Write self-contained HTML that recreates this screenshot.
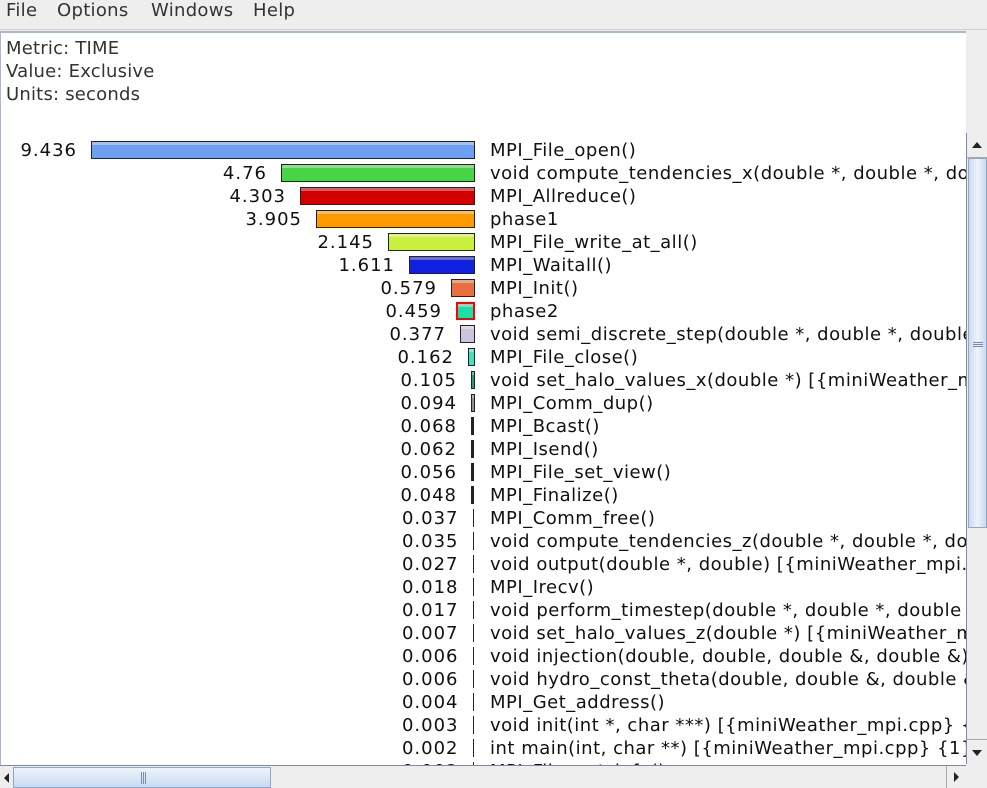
<!DOCTYPE html>
<html><head><meta charset="utf-8"><style>
*{margin:0;padding:0;box-sizing:border-box}
body{width:987px;height:788px;overflow:hidden;background:#eeeeee;font-family:"DejaVu Sans","Liberation Sans",sans-serif;color:#222;position:relative}
.menu{position:absolute;top:0;left:0;width:987px;height:30px;background:#eeeeee;border-bottom:1px solid #d0d0d0;font-size:18px;color:#333;letter-spacing:0.3px}
.menu span{position:absolute;top:0px}
.content{position:absolute;left:0;top:31px;width:966px;height:734px;background:#fff;border-top:2px solid #a9b8cc;border-left:1px solid #a9b8cc;overflow:hidden}
.hdr{position:absolute;left:5px;font-size:18px;color:#333;letter-spacing:0.2px}
.v{position:absolute;font-size:18px;text-align:right;width:120px;color:#111;letter-spacing:1px}
.l{position:absolute;left:490px;font-size:18px;white-space:nowrap;color:#111;letter-spacing:0.5px}
.b{position:absolute;height:18px;border:1.5px solid #222;box-shadow:inset 0 3px 0 rgba(255,255,255,.35)}
.vs{position:absolute;left:966px;top:133px;width:21px;height:631px;background:#eeeeee;border-left:1px solid #7a8aa8}
.hs{position:absolute;left:0;top:765px;width:966px;height:23px;background:#eeeeee;border-top:1px solid #7a8aa8}
.thumbv{position:absolute;left:1px;top:25px;width:19px;height:370px;background:linear-gradient(90deg,#c8daf0,#eef4fb 50%,#c8daf0);border:1px solid #8ea6c8}
.thumbh{position:absolute;left:13px;top:1px;width:258px;height:21px;background:linear-gradient(#eef4fb,#c8daf0);border:1px solid #8ea6c8}
</style></head><body>
<div class="menu"><span style="left:6px">File</span><span style="left:57px">Options</span><span style="left:151px">Windows</span><span style="left:253px">Help</span></div>
<div class="content">
<div class="hdr" style="top:5px">Metric: TIME</div>
<div class="hdr" style="top:28px">Value: Exclusive</div>
<div class="hdr" style="top:51px">Units: seconds</div>
</div>
<div class="vs">
<div style="position:absolute;left:0;top:0;width:20px;height:25px;border-bottom:1px solid #aaa"><div style="position:absolute;left:5px;top:9px;width:0;height:0;border-left:5px solid transparent;border-right:5px solid transparent;border-bottom:6px solid #222"></div></div>
<div class="thumbv"><div style="position:absolute;left:4px;top:183px;width:10px;height:5px;border-top:1px solid #7a8aa8;border-bottom:1px solid #7a8aa8"></div><div style="position:absolute;left:4px;top:185px;width:10px;height:1px;background:#7a8aa8"></div></div>
<div style="position:absolute;left:0;top:606px;width:20px;height:25px;border-top:1px solid #aaa"><div style="position:absolute;left:5px;top:10px;width:0;height:0;border-left:5px solid transparent;border-right:5px solid transparent;border-top:6px solid #222"></div></div>
</div>
<div class="hs">
<div style="position:absolute;left:4px;top:7px;width:0;height:0;border-top:5px solid transparent;border-bottom:5px solid transparent;border-right:5px solid #222"></div>
<div class="thumbh"><div style="position:absolute;left:127px;top:4px;width:5px;height:12px;border-left:1px solid #7a8aa8;border-right:1px solid #7a8aa8"></div><div style="position:absolute;left:129px;top:4px;width:1px;height:12px;background:#7a8aa8"></div></div>
<div style="position:absolute;left:946px;top:0;width:20px;height:22px;border-left:1px solid #aaa"><div style="position:absolute;left:7px;top:6px;width:0;height:0;border-top:5px solid transparent;border-bottom:5px solid transparent;border-left:5px solid #222"></div></div>
</div>
<div style="position:absolute;left:966px;top:31px;width:21px;height:102px;background:#eeeeee"></div>
<div id="wrap" style="position:absolute;left:0;top:33px;width:966px;height:732px;overflow:hidden"></div>
<script>
var d=[["9.436","MPI_File_open()","#6f9ff0"],["4.76","void compute_tendencies_x(double *, double *, double *, double *)","#45d545"],["4.303","MPI_Allreduce()","#d40000"],["3.905","phase1","#ff9a00"],["2.145","MPI_File_write_at_all()","#c8f03c"],["1.611","MPI_Waitall()","#1020e0"],["0.579","MPI_Init()","#e87040"],["0.459","phase2","#18e0a8"],["0.377","void semi_discrete_step(double *, double *, double *)","#ccc4dc"],["0.162","MPI_File_close()","#40e0c0"],["0.105","void set_halo_values_x(double *) [{miniWeather_mpi.cpp}]","#20a080"],["0.094","MPI_Comm_dup()","#909090"],["0.068","MPI_Bcast()","#222"],["0.062","MPI_Isend()","#222"],["0.056","MPI_File_set_view()","#222"],["0.048","MPI_Finalize()","#222"],["0.037","MPI_Comm_free()","#222"],["0.035","void compute_tendencies_z(double *, double *, double *)","#222"],["0.027","void output(double *, double) [{miniWeather_mpi.cpp}]","#222"],["0.018","MPI_Irecv()","#222"],["0.017","void perform_timestep(double *, double *, double *)","#222"],["0.007","void set_halo_values_z(double *) [{miniWeather_mpi.cpp}]","#222"],["0.006","void injection(double, double, double &, double &)","#222"],["0.006","void hydro_const_theta(double, double &, double &)","#222"],["0.004","MPI_Get_address()","#222"],["0.003","void init(int *, char ***) [{miniWeather_mpi.cpp}  {1}]","#222"],["0.002","int main(int, char **) [{miniWeather_mpi.cpp}  {1}]","#222"],["0.002","MPI_File_get_info()","#222"]];
var w=document.getElementById('wrap'),h='';
for(var i=0;i<d.length;i++){var v=parseFloat(d[i][0]),cy=150+23*i-33;var bw=Math.round(v*40.7);var left;
if(bw>=4){left=475-bw;var bc=i==7?'#ff0000':'#222';h+='<div class="b" style="left:'+left+'px;top:'+(cy-9)+'px;width:'+bw+'px;background:'+d[i][2]+';border-color:'+bc+(i==7?';border-width:2px':'')+'"></div>';}
else{var ww=(v>=0.04?3:1.5);left=474-ww;h+='<div style="position:absolute;left:'+left+'px;top:'+(cy-9)+'px;width:'+ww+'px;height:18px;background:#222"></div>';}
h+='<div class="v" style="left:'+(left-134)+'px;top:'+(cy-10)+'px">'+d[i][0]+'</div>';
h+='<div class="l" style="top:'+(cy-10)+'px">'+d[i][1].replace(/&/g,'&amp;')+'</div>';}
w.innerHTML=h;
</script>
</body></html>
